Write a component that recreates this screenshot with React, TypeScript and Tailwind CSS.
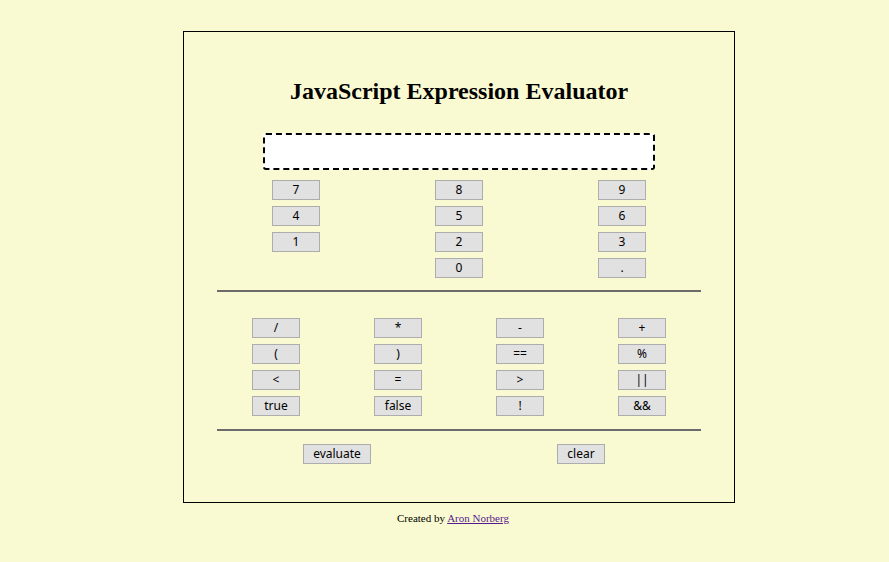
import React, { useState } from 'react'

const btn =
  'h-[20px] w-[48px] border border-[#adadad] bg-[#e1e1e1] text-[12px] leading-[18px] text-black text-center p-0'

export default function App() {
  const [expr, setExpr] = useState('')

  const add = (s: string) => setExpr((e) => e + s)

  const digitRows = [
    ['7', '8', '9'],
    ['4', '5', '6'],
    ['1', '2', '3'],
    ['', '0', '.'],
  ]

  const opRows = [
    ['/', '*', '-', '+'],
    ['(', ')', '==', '%'],
    ['<', '=', '>', '||'],
    ['true', 'false', '!', '&&'],
  ]

  const evaluate = () => {
    try {
      // eslint-disable-next-line no-new-func
      setExpr(String(new Function('return (' + expr + ')')()))
    } catch {
      setExpr('error')
    }
  }

  return (
    <div
      className="min-h-[562px] w-full bg-[#fafad2] pt-[31px]"
      style={{ fontFamily: '"Noto Sans", Tahoma, sans-serif' }}
    >
      <div className="ml-[183px] w-[552px] border border-black">
        <h1
          className="pt-[45px] text-center text-[24px] leading-[28px] font-bold text-black"
          style={{ fontFamily: '"Liberation Serif", "Times New Roman", serif' }}
        >
          JavaScript Expression Evaluator
        </h1>

        <input
          type="text"
          value={expr}
          onChange={(e) => setExpr(e.target.value)}
          className="mx-auto mt-[28px] block h-[37px] w-[392px] rounded-[3px] border-2 border-dashed border-black bg-white px-2 text-[14px] outline-none"
        />

        {/* siffror */}
        <div className="mx-auto mt-[10px] flex w-[374px] flex-col gap-[6px]">
          {digitRows.map((row, i) => (
            <div key={i} className="flex justify-between">
              {row.map((d, j) =>
                d ? (
                  <button key={j} type="button" className={btn} onClick={() => add(d)}>
                    {d}
                  </button>
                ) : (
                  <div key={j} className="w-[48px]" />
                ),
              )}
            </div>
          ))}
        </div>

        <div className="mx-auto mt-[12px] h-[2px] w-[484px] bg-[#6b6b6b]" />

        {/* operatorer */}
        <div className="mx-auto mt-[26px] flex w-[414px] flex-col gap-[6px]">
          {opRows.map((row, i) => (
            <div key={i} className="flex justify-between">
              {row.map((op) => (
                <button
                  key={op}
                  type="button"
                  className={btn}
                  onClick={() => add(op === 'true' || op === 'false' ? op : ' ' + op + ' ')}
                >
                  {op}
                </button>
              ))}
            </div>
          ))}
        </div>

        <div className="mx-auto mt-[13px] h-[2px] w-[484px] bg-[#6b6b6b]" />

        <div className="mx-auto mt-[13px] mb-[38px] grid w-[488px] grid-cols-2 justify-items-center">
          <button type="button" className={btn + ' !w-[68px]'} onClick={evaluate}>
            evaluate
          </button>
          <button type="button" className={btn} onClick={() => setExpr('')}>
            clear
          </button>
        </div>
      </div>

      <p
        className="mt-[8px] ml-[183px] w-[552px] pr-[12px] text-center text-[11px] leading-[14px] text-black"
        style={{ fontFamily: '"Liberation Serif", "Times New Roman", serif' }}
      >
        Created by{' '}
        <a href="#" className="text-[#551a8b] underline">
          Aron Norberg
        </a>
      </p>
    </div>
  )
}
